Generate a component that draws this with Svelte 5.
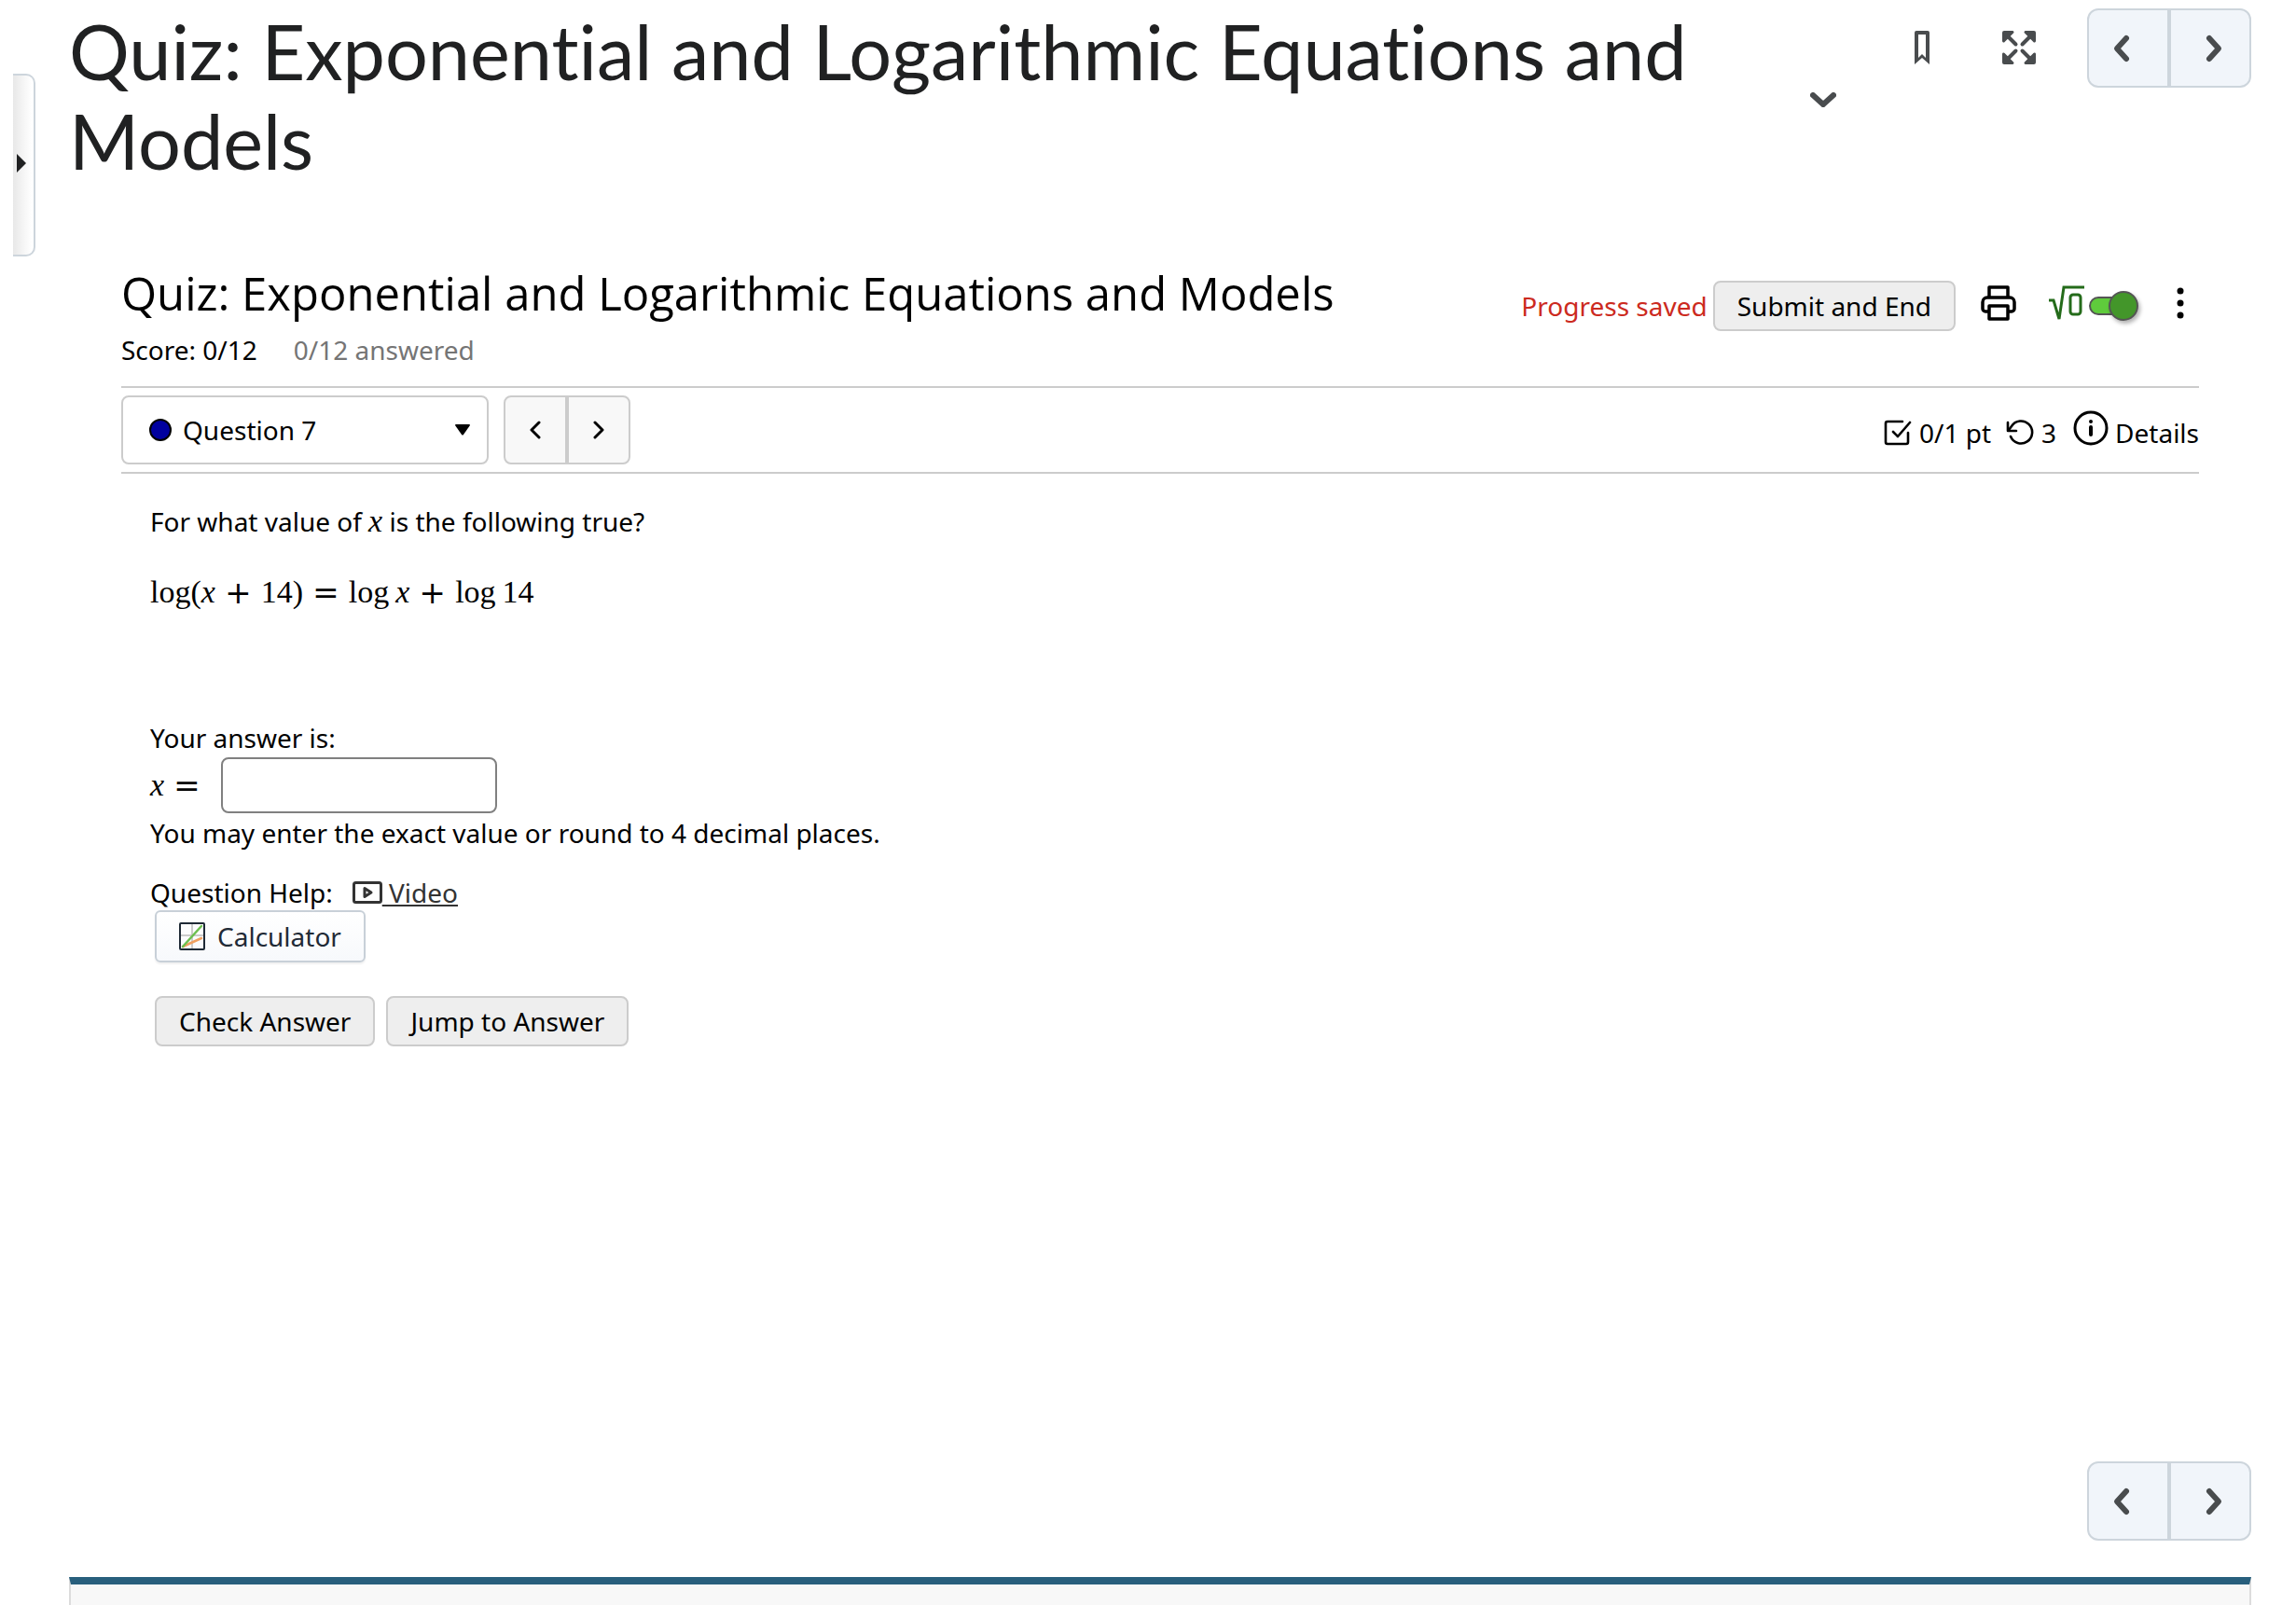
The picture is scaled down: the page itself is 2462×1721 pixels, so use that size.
<script>
  const title = 'Quiz: Exponential and Logarithmic Equations and Models';
  const total = 12;

  let question = $state(7);
  let answer = $state('');
  let mathEntry = $state(true);

  function step(by) {
    question = Math.min(total, Math.max(1, question + by));
  }
</script>

{#snippet chevron(points)}
  <svg class="chevron" width="36" height="36" viewBox="0 0 36 36" aria-hidden="true">
    <polyline {points} />
  </svg>
{/snippet}

{#snippet pager(label)}
  <nav class="pager" aria-label={label}>
    <button aria-label="Previous page">{@render chevron('22,7 12,18 22,29')}</button>
    <button aria-label="Next page">{@render chevron('14,7 24,18 14,29')}</button>
  </nav>
{/snippet}

<div class="page">
  <button class="drawer-tab" aria-label="Open table of contents">
    <svg width="10" height="20" viewBox="0 0 10 20" aria-hidden="true"><path d="M0 0l10 10L0 20z" /></svg>
  </button>

  <header class="topbar">
    <h1>{title}</h1>
    <button class="icon-btn menu-toggle" aria-label="Topic menu">
      <svg width="28" height="16" viewBox="0 0 28 16" aria-hidden="true">
        <polyline points="3,3 14,13 25,3" fill="none" stroke="#494c4e" stroke-width="6" stroke-linecap="round" />
      </svg>
    </button>
    <div class="tools">
      <button class="icon-btn" aria-label="Bookmark">
        <svg width="16" height="36" viewBox="0 0 16 36" aria-hidden="true">
          <path fill="#494c4e" fill-rule="evenodd" d="M2 0h12a2 2 0 0 1 2 2v34l-8-7-8 7V2a2 2 0 0 1 2-2zM4 4v25l4-4 4 4V4z" />
        </svg>
      </button>
      <button class="icon-btn" aria-label="Full screen">
        <svg width="36" height="36" viewBox="0 0 36 36" aria-hidden="true">
          <g id="corner" fill="#494c4e">
            <path d="M2 0h9a1.500 1.500 0 0 1 1 2.600L2.600 12A1.500 1.500 0 0 1 0 11V2a2 2 0 0 1 2-2z" />
            <path d="M5 5l9.500 9.500" stroke="#494c4e" stroke-width="4" stroke-linecap="round" />
          </g>
          <use href="#corner" transform="rotate(90 18 18)" />
          <use href="#corner" transform="rotate(180 18 18)" />
          <use href="#corner" transform="rotate(270 18 18)" />
        </svg>
      </button>
    </div>
    {@render pager('Topic navigation')}
  </header>

  <main class="quiz">
    <div class="quiz-head">
      <div>
        <h2>{title}</h2>
        <div class="scores">
          <span>Score: 0/12</span>
          <span class="muted">0/12 answered</span>
        </div>
      </div>
      <div class="quiz-tools">
        <span class="notice">Progress saved</span>
        <button class="btn">Submit and End</button>
        <button class="icon-btn print" aria-label="Print">
          <svg width="38" height="38" viewBox="0 0 38 38" fill="none" stroke="#000" stroke-width="3.500" stroke-linejoin="round" aria-hidden="true">
            <path d="M9 13V2h20v11" />
            <path d="M9 28H5a3 3 0 0 1-3-3v-7a5 5 0 0 1 5-5h24a5 5 0 0 1 5 5v7a3 3 0 0 1-3 3h-4" />
            <path d="M9 22h20v14H9z" />
          </svg>
        </button>
        <label class="math-toggle">
          <svg width="38" height="38" viewBox="0 0 38 38" fill="none" stroke="#246b1a" aria-hidden="true">
            <path d="M0 16h5l6 20L16 2h22" stroke-width="3" />
            <rect x="23" y="10" width="11" height="21" rx="3" stroke-width="3" />
          </svg>
          <input type="checkbox" role="switch" aria-label="Equation editor" bind:checked={mathEntry} />
        </label>
        <button class="icon-btn more" aria-label="More options">
          <svg width="8" height="36" viewBox="0 0 8 36" aria-hidden="true">
            <circle cx="4" cy="5" r="3.500" /><circle cx="4" cy="18" r="3.500" /><circle cx="4" cy="31" r="3.500" />
          </svg>
        </button>
      </div>
    </div>

    <div class="question-bar">
      <div class="picker">
        <span class="dot"></span>
        <select aria-label="Select question" bind:value={question}>
          {#each Array(total) as _, i}
            <option value={i + 1}>Question {i + 1}</option>
          {/each}
        </select>
        <svg width="16" height="12" viewBox="0 0 16 12" aria-hidden="true"><path d="M1 0h14a1 1 0 0 1 1 1L9 11q-1 1-2 0L0 1a1 1 0 0 1 1-1z" /></svg>
      </div>
      <div class="steps">
        <button aria-label="Previous question" onclick={() => step(-1)}>
          <svg width="12" height="20" viewBox="0 0 12 20" aria-hidden="true"><polyline points="10,2 2,10 10,18" /></svg>
        </button>
        <button aria-label="Next question" onclick={() => step(1)}>
          <svg width="12" height="20" viewBox="0 0 12 20" aria-hidden="true"><polyline points="2,2 10,10 2,18" /></svg>
        </button>
      </div>

      <div class="status">
        <svg width="30" height="28" viewBox="0 0 30 28" fill="none" stroke="#000" stroke-width="2.600" stroke-linecap="round" stroke-linejoin="round" aria-hidden="true">
          <path d="M20 2H4a2 2 0 0 0-2 2v20a2 2 0 0 0 2 2h20a2 2 0 0 0 2-2V14" />
          <path d="M10 13l5 5L28 3" />
        </svg>
        <span>0/1 pt</span>
        <svg class="retry" width="30" height="28" viewBox="0 0 30 28" fill="none" stroke="#000" stroke-width="2.600" stroke-linecap="round" stroke-linejoin="round" aria-hidden="true">
          <path d="M2 3v9h9" />
          <path d="M3 11l3-4a12 12 0 1 1-1 11" />
        </svg>
        <span>3</span>
        <button class="details">
          <svg width="38" height="38" viewBox="0 0 38 38" fill="none" stroke="#000" stroke-width="3" stroke-linecap="round" aria-hidden="true">
            <circle cx="19" cy="19" r="17" />
            <path d="M19 18v8M19 12v0.100" stroke-width="4" />
          </svg>
          Details
        </button>
      </div>
    </div>

    <section class="question">
      <p>For what value of <i class="math">x</i> is the following true?</p>
      <p class="formula math">
        <span>log(<i>x</i></span><span class="op">+</span><span>14)</span><span class="op">=</span><span>log</span><i class="arg">x</i><span class="op">+</span><span>log</span><span class="arg">14</span>
      </p>

      <div class="answer">
        <label for="answer">Your answer is:</label>
        <div class="answer-row">
          <span class="formula math"><i>x</i><span class="op">=</span></span>
          <input id="answer" type="text" autocomplete="off" bind:value={answer} />
        </div>
        <p>You may enter the exact value or round to 4 decimal places.</p>
      </div>

      <div class="help">
        <span>Question Help:</span>
        <a href="#video"><svg width="32" height="24" viewBox="0 0 32 24" fill="none" stroke="#333" stroke-width="3" stroke-linejoin="round" aria-hidden="true">
            <rect x="1.500" y="1.500" width="29" height="21" rx="2" />
            <path d="M13 7.500v9l7-4.500z" />
          </svg><span>&nbsp;Video</span></a>
      </div>

      <div class="actions">
        <button class="btn calculator">
          <svg width="28" height="30" viewBox="0 0 28 30" fill="none" aria-hidden="true">
            <path d="M14 2v26M2 14h24" stroke="#ccc" stroke-width="2" />
            <path d="M4 26L24 17" stroke="#f0a060" stroke-width="2.500" stroke-linecap="round" />
            <path d="M4 26L24 4" stroke="#6cbf50" stroke-width="2.500" stroke-linecap="round" />
            <rect x="1" y="1" width="26" height="28" rx="1" stroke="#1f2a36" stroke-width="2" />
          </svg>
          Calculator
        </button>
      </div>
      <div class="actions submit">
        <button class="btn">Check Answer</button>
        <button class="btn">Jump to Answer</button>
      </div>
    </section>
  </main>

  <div class="bottom-nav">{@render pager('Bottom navigation')}</div>
  <footer></footer>
</div>

<style>
  :global(body) {
    margin: 0;
    background: #fff;
  }

  .page {
    position: relative;
    box-sizing: border-box;
    min-height: 100vh;
    display: flex;
    flex-direction: column;
    padding: 9px 48px 0 74px;
    font-family: 'Noto Sans', sans-serif;
    font-size: 28px;
    line-height: 38px;
    color: #000;
  }

  h1,
  h2,
  p {
    margin: 0;
    font-weight: 400;
  }

  button,
  select,
  input {
    font: inherit;
    color: inherit;
    margin: 0;
  }

  button {
    cursor: pointer;
  }

  svg {
    display: block;
    flex: none;
  }

  .drawer-tab {
    position: absolute;
    left: 14px;
    top: 79px;
    box-sizing: border-box;
    width: 24px;
    height: 196px;
    padding: 0 0 4px 4px;
    border: 2px solid #cdd5dc;
    border-left: 0;
    border-radius: 0 10px 10px 0;
    background: linear-gradient(to right, #e8e8e8, #fff 90%);
  }

  .drawer-tab svg {
    fill: #202122;
  }

  /* Top bar */
  .topbar {
    display: flex;
    align-items: flex-start;
  }

  .topbar h1 {
    flex: 1;
    margin-top: -2px;
    font-family: Lato, sans-serif;
    font-size: 81px;
    font-variant-ligatures: none;
    line-height: 96px;
    color: #202122;
  }

  .icon-btn {
    padding: 0;
    border: 0;
    background: none;
  }

  .menu-toggle {
    margin: 90px 84px 0 48px;
  }

  .tools {
    display: flex;
    gap: 78px;
    margin: 24px 55px 0 0;
  }

  .pager {
    display: flex;
    flex: none;
  }

  .pager button {
    box-sizing: border-box;
    display: flex;
    align-items: center;
    justify-content: center;
    width: 88px;
    height: 85px;
    padding: 0;
    border: 2px solid #cdd5dc;
    background: #f1f5fa;
  }

  .pager button:first-child {
    border-radius: 12px 0 0 12px;
    padding-right: 12px;
  }

  .pager button:last-child {
    border-radius: 0 12px 12px 0;
    padding-left: 6px;
  }

  .chevron polyline {
    fill: none;
    stroke: #494c4e;
    stroke-width: 6;
    stroke-linecap: round;
    stroke-linejoin: round;
  }

  /* Quiz header */
  .quiz {
    margin: 80px 56px 0;
  }

  .quiz-head {
    display: flex;
    justify-content: space-between;
    align-items: flex-start;
    padding-bottom: 20px;
  }

  .quiz-head h2 {
    padding-top: 1px;
    font-family: 'Open Sans', sans-serif;
    font-size: 49px;
    line-height: 68px;
  }

  .scores {
    display: flex;
    gap: 39px;
    margin-top: 8px;
  }

  .muted {
    color: #757575;
  }

  .quiz-tools {
    display: flex;
    align-items: center;
    margin-top: 22px;
  }

  .notice {
    margin-right: 6px;
    color: #cc2a20;
  }

  .btn {
    box-sizing: border-box;
    height: 54px;
    padding: 0 24px;
    border: 2px solid #ccc;
    border-radius: 8px;
    background: #eee;
  }

  .print {
    margin: 0 35px 6px 27px;
  }

  .math-toggle {
    display: flex;
    align-items: center;
    gap: 5px;
  }

  .math-toggle svg {
    margin-bottom: 6px;
  }

  .math-toggle input {
    appearance: none;
    position: relative;
    box-sizing: border-box;
    width: 48px;
    height: 20px;
    border: 2px solid #555;
    border-radius: 10px;
    background: #ccc;
  }

  .math-toggle input:checked {
    background: #5fcb3c;
  }

  .math-toggle input::before {
    content: '';
    position: absolute;
    left: -2px;
    top: -8px;
    box-sizing: border-box;
    width: 32px;
    height: 32px;
    border: 2px solid #555;
    border-radius: 50%;
    background: #888;
    box-shadow: 2px 3px 4px rgba(0, 0, 0, 0.3);
  }

  .math-toggle input:checked::before {
    left: 19px;
    background: #43962a;
  }

  .more {
    margin: 0 16px 6px 46px;
  }

  /* Question bar */
  .question-bar {
    display: flex;
    align-items: center;
    padding: 8px 0;
    border-top: 2px solid #ccc;
    border-bottom: 2px solid #ccc;
  }

  .picker {
    box-sizing: border-box;
    display: flex;
    align-items: center;
    width: 394px;
    height: 74px;
    padding: 0 18px 0 28px;
    border: 2px solid #ccc;
    border-radius: 8px;
  }

  .dot {
    box-sizing: border-box;
    width: 24px;
    height: 24px;
    border: 2px solid #000;
    border-radius: 50%;
    background: #00009f;
  }

  .picker select {
    appearance: none;
    flex: 1;
    padding: 0 0 0 12px;
    border: 0;
    background: none;
  }

  .steps {
    display: flex;
    margin-left: 16px;
  }

  .steps button {
    box-sizing: border-box;
    display: flex;
    align-items: center;
    justify-content: center;
    width: 68px;
    height: 74px;
    padding: 0;
    border: 2px solid #ccc;
    background: #f8f8f8;
  }

  .steps button:first-child {
    border-radius: 8px 0 0 8px;
  }

  .steps button:last-child {
    border-radius: 0 8px 8px 0;
  }

  .steps polyline {
    fill: none;
    stroke: #000;
    stroke-width: 3;
    stroke-linecap: round;
    stroke-linejoin: round;
  }

  .status {
    display: flex;
    align-items: center;
    gap: 8px;
    margin-left: auto;
    padding-top: 6px;
  }

  .retry {
    margin-left: 8px;
  }

  .details {
    display: flex;
    align-items: center;
    gap: 7px;
    padding: 0;
    margin-left: 10px;
    border: 0;
    background: none;
  }

  .details svg {
    margin-bottom: 10px;
  }

  /* Question body */
  .question {
    padding: 32px 0 0 31px;
  }

  .math {
    font-family: 'Liberation Serif', serif;
    font-size: 34px;
    line-height: 38px;
  }

  .question p i.math {
    line-height: 1;
  }

  .formula {
    display: flex;
    align-items: baseline;
  }

  p.formula {
    margin-top: 38px;
  }

  .op {
    margin: 0 11px;
    font-family: 'DejaVu Math TeX Gyre', 'Liberation Serif', serif;
  }

  .arg {
    margin-left: 7px;
  }

  .answer {
    margin-top: 117px;
  }

  .answer label {
    display: block;
  }

  .answer-row {
    display: flex;
    align-items: center;
    gap: 12px;
    margin: 2px 0;
  }

  .answer-row input {
    box-sizing: border-box;
    width: 296px;
    height: 60px;
    padding: 0 12px;
    border: 2px solid #808080;
    border-radius: 8px;
    background: #fff;
  }

  .help {
    display: flex;
    gap: 21px;
    margin-top: 26px;
  }

  .help a {
    display: flex;
    color: #333;
    text-decoration: none;
  }

  .help a svg {
    margin-top: 7px;
  }

  .help a span {
    text-decoration: underline;
  }

  .actions {
    display: flex;
    gap: 12px;
    padding-left: 5px;
  }

  .submit {
    margin-top: 36px;
  }

  .calculator {
    display: flex;
    align-items: center;
    gap: 13px;
    height: 56px;
    border-color: #c8d0d8;
    border-radius: 6px;
    background: linear-gradient(#fff, #f7f9fc);
    box-shadow: 0 2px 2px rgba(0, 0, 0, 0.06);
    color: #1f2a36;
  }

  /* Page end */
  .bottom-nav {
    display: flex;
    justify-content: flex-end;
    margin-top: auto;
    padding: 40px 0 39px;
  }

  footer {
    box-sizing: border-box;
    height: 30px;
    border: 2px solid #dcdcdc;
    border-top: 8px solid #285f7d;
    border-bottom: 0;
    background: #f8f8f8;
  }
</style>
